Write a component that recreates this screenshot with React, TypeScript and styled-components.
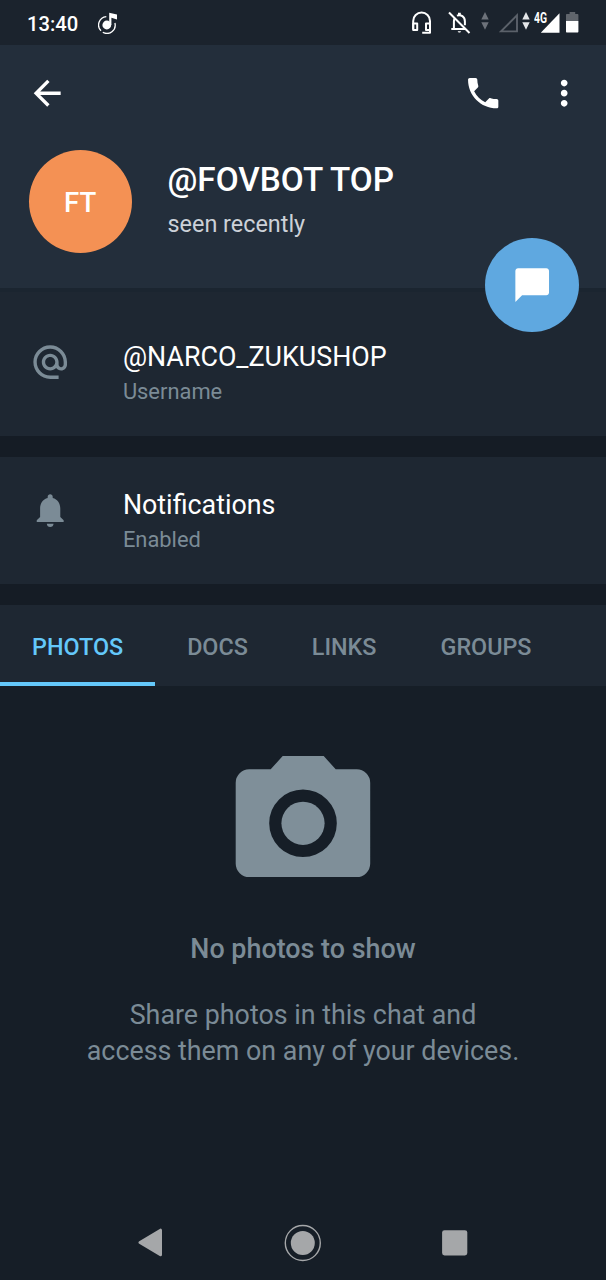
import React from "react";
import styled, { createGlobalStyle } from "styled-components";

const color = {
  status: "#1b232d",
  header: "#232e3b",
  section: "#1e2732",
  page: "#161e27",
  muted: "#7b8b96",
  accent: "#64c8fa",
};

const GlobalStyle = createGlobalStyle`
  *, *::before, *::after { box-sizing: border-box; }
  html, body { margin: 0; padding: 0; background: ${color.page}; }
  body { font-family: Roboto, "Noto Sans", sans-serif; -webkit-font-smoothing: antialiased; }
  svg { display: block; flex: none; }
`;

const Screen = styled.div`
  width: 606px;
  height: 1280px;
  display: flex;
  flex-direction: column;
  background: ${color.page};
  color: #fff;
  overflow: hidden;
`;

const StatusBar = styled.div`
  height: 45px;
  flex: none;
  display: flex;
  align-items: center;
  padding: 0 27px 0 27px;
  background: ${color.status};
`;

const Clock = styled.span`
  width: 70.5px;
  font-size: 20.2px;
  font-weight: 500;
  line-height: 48px;
  padding-top: 3px;
`;

const StatusIcons = styled.div`
  margin-left: auto;
  display: flex;
  align-items: center;
`;

const StatusItem = styled.div<{ $gap?: number }>`
  position: relative;
  margin-left: ${(p) => p.$gap ?? 0}px;
`;

const NetworkLabel = styled.span`
  position: absolute;
  left: -7px;
  top: -1px;
  font-size: 13.8px;
  font-weight: 700;
  line-height: 14px;
  transform: scaleX(0.75);
  transform-origin: left top;
`;

const Header = styled.header`
  position: relative;
  height: 243px;
  flex: none;
  display: flex;
  flex-direction: column;
  background: ${color.header};
`;

const Toolbar = styled.div`
  height: 95.6px;
  display: flex;
  align-items: center;
  padding: 0 21.4px 0 26.8px;
`;

const ToolbarActions = styled.div`
  margin-left: auto;
  display: flex;
  gap: 40.9px;
`;

const Profile = styled.div`
  display: flex;
  align-items: flex-start;
  padding: 9.1px 0 0 28.5px;
`;

const Avatar = styled.div`
  width: 103.5px;
  height: 103.5px;
  border-radius: 50%;
  background: #f49154;
  display: flex;
  align-items: center;
  justify-content: center;
  font-size: 27.6px;
  font-weight: 500;
  line-height: 32px;
  padding-top: 3px;
`;

const ProfileText = styled.div`
  padding: 10.3px 0 0 35.5px;
`;

const Name = styled.h1`
  margin: 0;
  font-size: 33.3px;
  font-weight: 500;
  line-height: 40px;
`;

const Seen = styled.p`
  margin: 8px 0 0;
  font-size: 23.4px;
  line-height: 32px;
  color: #ccd1d8;
`;

const MessageButton = styled.button`
  position: absolute;
  right: 27px;
  bottom: -44px;
  width: 94.4px;
  height: 94.4px;
  border: 0;
  padding: 1.6px 0 0;
  border-radius: 50%;
  background: #5fa8e0;
  display: flex;
  align-items: center;
  justify-content: center;
`;

const Section = styled.section<{ $height: number; $top: number; $shadow?: boolean }>`
  height: ${(p) => p.$height}px;
  flex: none;
  padding: ${(p) => p.$top}px 0 0 30.4px;
  display: flex;
  align-items: flex-start;
  background: ${color.section};
  border-top: ${(p) => (p.$shadow ? "4px solid #1b2530" : "0")};
`;

const Divider = styled.div<{ $height: number }>`
  height: ${(p) => p.$height}px;
  flex: none;
  background: #151c25;
`;

const RowText = styled.div`
  margin-left: 52.1px;
`;

const RowTitle = styled.div`
  font-size: 26.85px;
  line-height: 36px;
`;

const RowLabel = styled.div`
  font-size: 21.9px;
  line-height: 34px;
  color: ${color.muted};
`;

const RowIcon = styled.div`
  padding-top: 3px;
`;

const Tabs = styled.nav`
  height: 80.5px;
  flex: none;
  display: flex;
  background: ${color.section};
`;

const Tab = styled.button<{ $active?: boolean }>`
  height: 80.5px;
  border: 0;
  background: none;
  padding: 8px 32px 0;
  font: 500 23.35px/32px Roboto, sans-serif;
  color: ${(p) => (p.$active ? color.accent : color.muted)};
  border-bottom: 4px solid ${(p) => (p.$active ? color.accent : "transparent")};
`;

const Empty = styled.main`
  flex: 1;
  padding-top: 70.2px;
  display: flex;
  flex-direction: column;
  align-items: center;
  text-align: center;
  color: ${color.muted};
`;

const EmptyTitle = styled.h2`
  margin: 53.3px 0 0;
  font-size: 26.9px;
  font-weight: 500;
  line-height: 36px;
`;

const EmptyText = styled.p`
  margin: 29.6px 0 0;
  font-size: 26.85px;
  line-height: 36.5px;
`;

const NavBar = styled.footer`
  height: 75px;
  flex: none;
  display: flex;
  align-items: center;
  justify-content: space-between;
  padding: 0 138.5px 0 137.5px;
`;

type GlyphProps = { d: string; fill?: string };

const Glyph = ({ d, fill = "#fff" }: GlyphProps) => (
  <svg width="40.4" height="40.4" viewBox="0 0 24 24" fill={fill}>
    <path d={d} />
  </svg>
);

const paths = {
  back: "M20 11H7.83l5.59-5.59L12 4l-8 8 8 8 1.41-1.41L7.83 13H20v-2z",
  call: "M6.62 10.79c1.44 2.83 3.76 5.14 6.59 6.59l2.2-2.2c.27-.27.67-.36 1.02-.24 1.12.37 2.33.57 3.57.57.55 0 1 .45 1 1V20c0 .55-.45 1-1 1-9.39 0-17-7.61-17-17 0-.55.45-1 1-1h3.5c.55 0 1 .45 1 1 0 1.25.2 2.45.57 3.57.11.35.03.74-.25 1.02l-2.2 2.2z",
  more: "M12 8c1.1 0 2-.9 2-2s-.9-2-2-2-2 .9-2 2 .9 2 2 2zm0 2c-1.1 0-2 .9-2 2s.9 2 2 2 2-.9 2-2-.9-2-2-2zm0 6c-1.1 0-2 .9-2 2s.9 2 2 2 2-.9 2-2-.9-2-2-2z",
  at: "M12 1.95c-5.52 0-10 4.48-10 10s4.48 10 10 10h5v-2h-5c-4.34 0-8-3.66-8-8s3.66-8 8-8 8 3.66 8 8v1.43c0 .79-.71 1.57-1.5 1.57s-1.5-.78-1.5-1.57v-1.43c0-2.76-2.24-5-5-5s-5 2.24-5 5 2.24 5 5 5c1.38 0 2.64-.56 3.54-1.47.65.89 1.77 1.47 2.96 1.47 1.97 0 3.5-1.6 3.5-3.57v-1.43c0-5.52-4.48-10-10-10zm0 13c-1.66 0-3-1.34-3-3s1.34-3 3-3 3 1.34 3 3-1.34 3-3 3z",
  bell: "M12 22c1.1 0 2-.9 2-2h-4c0 1.1.89 2 2 2zm6-6v-5c0-3.07-1.64-5.64-4.5-6.32V4c0-.83-.67-1.5-1.5-1.5s-1.5.67-1.5 1.5v.68C7.63 5.36 6 7.92 6 11v5l-2 2v1h16v-1l-2-2z",
  chat: "M3.6 2h16.8c.9 0 1.6.7 1.6 1.6v12.8c0 .9-.7 1.6-1.6 1.6H6l-4 4V3.6C2 2.7 2.7 2 3.6 2z",
};

const MusicIcon = () => (
  <svg width="20" height="22" viewBox="0 0 20 22" fill="none">
    <circle cx="8.8" cy="13" r="4.4" fill="#fff" />
    <path d="M11.2 13V.8L19 2.4v5.2l-5.6-1.8V13z" fill="#fff" />
    <path d="M8.3 4.7A8.3 8.3 0 0 0 3 18.8M4.8 20.3A8.3 8.3 0 0 0 16.9 11" stroke="#fff" strokeWidth="1.3" />
  </svg>
);

const HeadsetIcon = () => (
  <svg width="20" height="23" viewBox="0 0 20 23" fill="none" stroke="#fff" strokeWidth="2" strokeLinejoin="round">
    <path d="M1.2 18.6V10a8.4 8.4 0 0 1 16.8 0v11.8H10.2" />
    <path d="M1.2 12.6h4v6.5h-4zM14 12.6h4v6.5h-4z" />
  </svg>
);

const BellOffIcon = () => (
  <svg width="23" height="23" viewBox="0 0 23 23" fill="none" stroke="#fff" strokeWidth="2">
    <path d="M1 1.5l20.5 20.5" />
    <path d="M5.9 18V10.4c0-1.4.3-2.6 1-3.6M3.3 18h13.8M8.9 4.6c4-1.5 8 1 8 5.8v3.8" />
    <path d="M10 1.8h2.8v2.4H10zM9.6 20.2h3.6l-1 1.4h-1.6z" fill="#fff" stroke="none" />
  </svg>
);

const DataArrows = ({ fill }: { fill: string }) => (
  <svg width="8" height="21" viewBox="0 0 8 21" fill={fill}>
    <path d="M4 0l3.7 7.6H.3zM4 17.8L.3 10.2h7.4z" />
  </svg>
);

const SignalEmpty = () => (
  <svg width="20" height="20" viewBox="0 0 20 20" fill="none" stroke="#5b616a" strokeWidth="1.9">
    <path d="M18 2.400v16H2z" />
  </svg>
);

const SignalFull = () => (
  <svg width="20" height="21" viewBox="0 0 20 21" fill="#fff">
    <path d="M18.500 1.300v19.400H-.3z" />
  </svg>
);

const BatteryIcon = () => (
  <svg width="13" height="21" viewBox="0 0 13 21">
    <path d="M3.6 0h5.600v2h2.200c.6 0 1 .4 1 1v6H0V3c0-.6.4-1 1-1h2.600z" fill="#60656c" />
    <path d="M0 9h12.400v10.600c0 .6-.4 1-1 1H1c-.6 0-1-.4-1-1z" fill="#fff" />
  </svg>
);

const CameraIcon = () => (
  <svg width="136" height="122" viewBox="0 0 136 122">
    <path
      fill="#7f8f99"
      fillRule="evenodd"
      d="M47.700 0h41l12 13.300h21A13.500 13.500 0 0 1 135.200 26.800v81a13.500 13.500 0 0 1-13.500 13.300H14.200A13.500 13.500 0 0 1 .7 107.800V26.800A13.500 13.500 0 0 1 14.200 13.300h21.500zM68 33.500a33.800 33.800 0 1 0 0 67.600 33.800 33.800 0 1 0 0-67.600z"
    />
    <circle cx="68" cy="67.300" r="21.600" fill="#7f8f99" />
  </svg>
);

const tabs = ["PHOTOS", "DOCS", "LINKS", "GROUPS"];

export default function App() {
  return (
    <Screen>
      <GlobalStyle />
      <StatusBar>
        <Clock>13:40</Clock>
        <MusicIcon />
        <StatusIcons>
          <StatusItem><HeadsetIcon /></StatusItem>
          <StatusItem $gap={16}><BellOffIcon /></StatusItem>
          <StatusItem $gap={10}><DataArrows fill="#6d727a" /></StatusItem>
          <StatusItem $gap={10}><SignalEmpty /></StatusItem>
          <StatusItem $gap={3}><DataArrows fill="#e4e6e8" /></StatusItem>
          <StatusItem $gap={11}>
            <SignalFull />
            <NetworkLabel>4G</NetworkLabel>
          </StatusItem>
          <StatusItem $gap={5}><BatteryIcon /></StatusItem>
        </StatusIcons>
      </StatusBar>

      <Header>
        <Toolbar>
          <Glyph d={paths.back} />
          <ToolbarActions>
            <Glyph d={paths.call} />
            <Glyph d={paths.more} />
          </ToolbarActions>
        </Toolbar>
        <Profile>
          <Avatar>FT</Avatar>
          <ProfileText>
            <Name>@FOVBOT TOP</Name>
            <Seen>seen recently</Seen>
          </ProfileText>
        </Profile>
        <MessageButton aria-label="Message">
          <Glyph d={paths.chat} />
        </MessageButton>
      </Header>

      <Section $height={148} $top={47} $shadow>
        <RowIcon><Glyph d={paths.at} fill={color.muted} /></RowIcon>
        <RowText>
          <RowTitle>@NARCO_ZUKUSHOP</RowTitle>
          <RowLabel>Username</RowLabel>
        </RowText>
      </Section>
      <Divider $height={20.5} />
      <Section $height={127.5} $top={30}>
        <RowIcon><Glyph d={paths.bell} fill={color.muted} /></RowIcon>
        <RowText>
          <RowTitle>Notifications</RowTitle>
          <RowLabel>Enabled</RowLabel>
        </RowText>
      </Section>
      <Divider $height={21} />

      <Tabs>
        {tabs.map((name, i) => (
          <Tab key={name} $active={i === 0}>{name}</Tab>
        ))}
      </Tabs>

      <Empty>
        <CameraIcon />
        <EmptyTitle>No photos to show</EmptyTitle>
        <EmptyText>
          Share photos in this chat and
          <br />
          access them on any of your devices.
        </EmptyText>
      </Empty>

      <NavBar>
        <svg width="25" height="29" viewBox="0 0 25 29">
          <path d="M22.5 2.2v24.6L2 14.5z" fill="#a5a7a9" stroke="#a5a7a9" strokeWidth="3" strokeLinejoin="round" />
        </svg>
        <svg width="38" height="38" viewBox="0 0 38 38">
          <circle cx="19.8" cy="19" r="17.5" fill="none" stroke="#a5a7a9" strokeWidth="1.4" />
          <circle cx="19.8" cy="19" r="12" fill="#a5a7a9" />
        </svg>
        <svg width="26" height="26" viewBox="0 0 26 26">
          <rect x=".1" y=".2" width="25.2" height="25.2" rx="2.4" fill="#a5a7a9" />
        </svg>
      </NavBar>
    </Screen>
  );
}
